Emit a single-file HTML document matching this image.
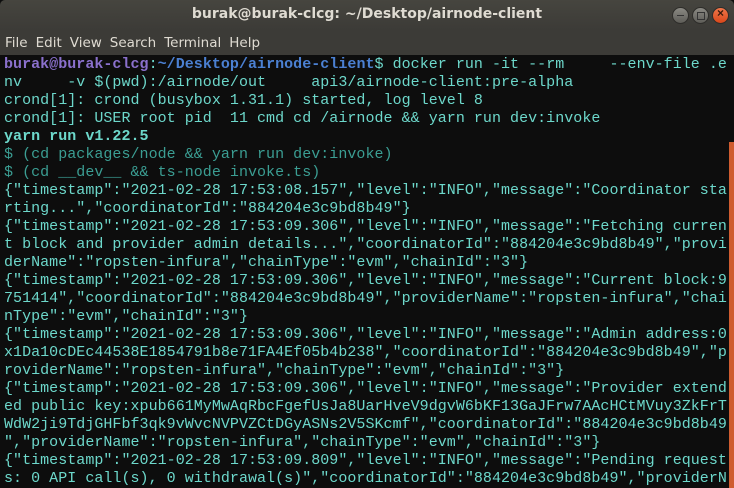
<!DOCTYPE html>
<html><head><style>
html,body{margin:0;padding:0;width:734px;height:488px;overflow:hidden;background:#0d0d0d}
#title{position:absolute;left:0;top:0;width:734px;height:30px;background:linear-gradient(#46453f,#3c3b37);border-radius:5px 5px 0 0;color:#dfdbd2;font:600 14px "DejaVu Sans","Liberation Sans",sans-serif;text-align:center;line-height:28px}
#menu{position:absolute;left:0;top:30px;width:734px;height:25px;background:#3c3b37;color:#dfdbd2;font:13.5px "DejaVu Sans","Liberation Sans",sans-serif;line-height:26px}
#menu span{margin-left:5px;margin-right:3px}
.btn{position:absolute;top:7px;width:15px;height:15px;border-radius:50%;background:linear-gradient(#8a8983,#5e5d58);border:1px solid #2e2d2a}
#term{position:absolute;left:4px;top:56px;font:15px "Liberation Mono","DejaVu Sans Mono",monospace;letter-spacing:0.035px;line-height:18px;color:#6dd8cb;white-space:pre}
.u{color:#8a70cc;font-weight:bold}.p{color:#4b80d2;font-weight:bold}.g{color:#3b9e93}.b{font-weight:bold}
#sb{position:absolute;left:729px;top:142px;width:5px;height:346px;background:#cf5c2f}
</style></head><body>
<div id="title">burak@burak-clcg: ~/Desktop/airnode-client</div>
<div class="btn" style="left:672px"><div style="position:absolute;left:4px;top:7px;width:7px;height:1px;background:#333"></div></div>
<div class="btn" style="left:692px"><div style="position:absolute;left:4px;top:4px;width:6px;height:6px;border:1px solid #333"></div></div>
<div class="btn" style="left:712px;background:linear-gradient(#f0764a,#d9471a)"><div style="position:absolute;left:0;top:-2px;width:15px;text-align:center;color:#3a1a0c;font:bold 12px sans-serif">×</div></div>
<div id="menu"><span>File</span><span>Edit</span><span>View</span><span>Search</span><span>Terminal</span><span>Help</span></div>
<div id="term"><span class="u">burak@burak-clcg</span>:<span class="p">~/Desktop/airnode-client</span>$ docker run -it --rm     --env-file .e
nv     -v $(pwd):/airnode/out     api3/airnode-client:pre-alpha
crond[1]: crond (busybox 1.31.1) started, log level 8
crond[1]: USER root pid  11 cmd cd /airnode &amp;&amp; yarn run dev:invoke
<span class="b">yarn run v1.22.5</span>
<span class="g">$ (cd packages/node &amp;&amp; yarn run dev:invoke)</span>
<span class="g">$ (cd __dev__ &amp;&amp; ts-node invoke.ts)</span>
{"timestamp":"2021-02-28 17:53:08.157","level":"INFO","message":"Coordinator sta
rting...","coordinatorId":"884204e3c9bd8b49"}
{"timestamp":"2021-02-28 17:53:09.306","level":"INFO","message":"Fetching curren
t block and provider admin details...","coordinatorId":"884204e3c9bd8b49","provi
derName":"ropsten-infura","chainType":"evm","chainId":"3"}
{"timestamp":"2021-02-28 17:53:09.306","level":"INFO","message":"Current block:9
751414","coordinatorId":"884204e3c9bd8b49","providerName":"ropsten-infura","chai
nType":"evm","chainId":"3"}
{"timestamp":"2021-02-28 17:53:09.306","level":"INFO","message":"Admin address:0
x1Da10cDEc44538E1854791b8e71FA4Ef05b4b238","coordinatorId":"884204e3c9bd8b49","p
roviderName":"ropsten-infura","chainType":"evm","chainId":"3"}
{"timestamp":"2021-02-28 17:53:09.306","level":"INFO","message":"Provider extend
ed public key:xpub661MyMwAqRbcFgefUsJa8UarHveV9dgvW6bKF13GaJFrw7AAcHCtMVuy3ZkFrT
WdW2ji9TdjGHFbf3qk9vWvcNVPVZCtDGyASNs2V5SKcmf","coordinatorId":"884204e3c9bd8b49
","providerName":"ropsten-infura","chainType":"evm","chainId":"3"}
{"timestamp":"2021-02-28 17:53:09.809","level":"INFO","message":"Pending request
s: 0 API call(s), 0 withdrawal(s)","coordinatorId":"884204e3c9bd8b49","providerN</div>
<div id="sb"></div>
</body></html>
